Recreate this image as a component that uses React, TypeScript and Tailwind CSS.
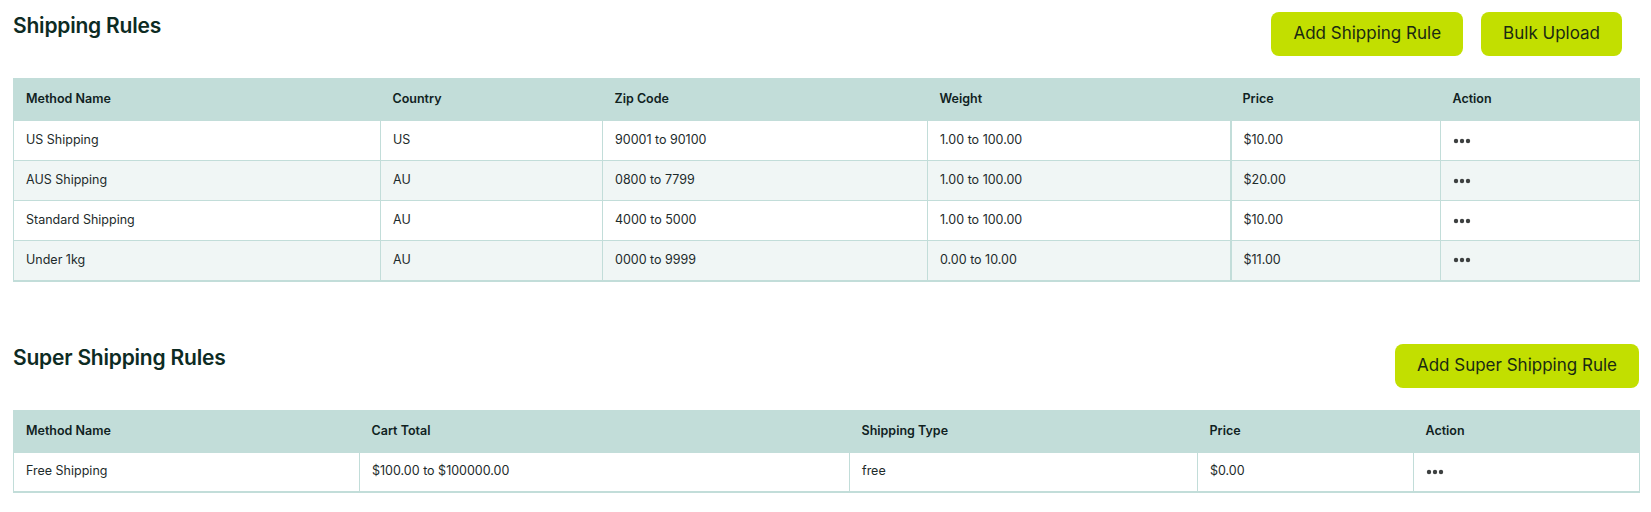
import React from 'react';

interface Column {
    label: string;
    width: number;
    thick?: boolean;
}

const shippingColumns: Column[] = [
    { label: 'Method Name', width: 367 },
    { label: 'Country', width: 222 },
    { label: 'Zip Code', width: 325 },
    { label: 'Weight', width: 303 },
    { label: 'Price', width: 210, thick: true },
    { label: 'Action', width: 199 },
];

const shippingRows = [
    ['US Shipping', 'US', '90001 to 90100', '1.00 to 100.00', '$10.00'],
    ['AUS Shipping', 'AU', '0800 to 7799', '1.00 to 100.00', '$20.00'],
    ['Standard Shipping', 'AU', '4000 to 5000', '1.00 to 100.00', '$10.00'],
    ['Under 1kg', 'AU', '0000 to 9999', '0.00 to 10.00', '$11.00'],
];

const superColumns: Column[] = [
    { label: 'Method Name', width: 346 },
    { label: 'Cart Total', width: 490 },
    { label: 'Shipping Type', width: 348 },
    { label: 'Price', width: 216 },
    { label: 'Action', width: 226 },
];

const superRows = [['Free Shipping', '$100.00 to $100000.00', 'free', '$0.00']];

const Dots = () => (
    <svg width="18" height="6" viewBox="0 0 18 6" className="block">
        <circle cx="3" cy="3" r="2.2" fill="#3d4040" />
        <circle cx="9" cy="3" r="2.2" fill="#3d4040" />
        <circle cx="15" cy="3" r="2.2" fill="#3d4040" />
    </svg>
);

const RulesTable: React.FC<{ columns: Column[]; rows: string[][] }> = ({ columns, rows }) => (
    <table className="w-full table-fixed border-collapse border border-[#c2ddd9] border-b-2 text-[12.5px] text-[#1d2b2b]">
        <colgroup>
            {columns.map((c) => (
                <col key={c.label} style={{ width: c.width }} />
            ))}
        </colgroup>
        <thead>
            <tr className="h-[42px] bg-[#c2ddd9]">
                {columns.map((c) => (
                    <th key={c.label} className="px-[12px] text-left font-semibold text-[#10221f]">
                        {c.label}
                    </th>
                ))}
            </tr>
        </thead>
        <tbody>
            {rows.map((row, i) => (
                <tr key={i} className={`h-[40px] ${i % 2 === 1 ? 'bg-[#f0f6f5]' : 'bg-white'}`}>
                    {row.map((cell, j) => (
                        <td
                            key={j}
                            className={`border border-[#c2ddd9] px-[12px] ${columns[j].thick ? 'border-l-2' : ''}`}
                        >
                            {cell}
                        </td>
                    ))}
                    <td className="border border-[#c2ddd9] px-[12px]">
                        <Dots />
                    </td>
                </tr>
            ))}
        </tbody>
    </table>
);

const Button: React.FC<{ children: React.ReactNode; className?: string }> = ({ children, className }) => (
    <button className={`h-[44px] rounded-lg bg-[#c2df00] px-[22px] text-[17px] text-[#1a2a12] ${className ?? ''}`}>
        {children}
    </button>
);

export default function App() {
    return (
        <div className="min-h-screen bg-white px-[13px] pt-[12px] pr-[12px] font-['Inter',sans-serif]">
            {/* Shipping Rules */}
            <div className="flex items-start justify-between">
                <h2 className="text-[21px] font-semibold leading-[28px] tracking-[-0.01em] text-[#0d2b23]">Shipping Rules</h2>
                <div className="mr-[17px] flex gap-[18px]">
                    <Button>Add Shipping Rule</Button>
                    <Button>Bulk Upload</Button>
                </div>
            </div>
            <div className="mt-[22px]">
                <RulesTable columns={shippingColumns} rows={shippingRows} />
            </div>

            {/* Super Shipping Rules */}
            <div className="mt-[62px] flex items-start justify-between">
                <h2 className="text-[21px] font-semibold leading-[28px] tracking-[-0.01em] text-[#0d2b23]">Super Shipping Rules</h2>
                <Button>Add Super Shipping Rule</Button>
            </div>
            <div className="mt-[22px]">
                <RulesTable columns={superColumns} rows={superRows} />
            </div>
        </div>
    );
}
